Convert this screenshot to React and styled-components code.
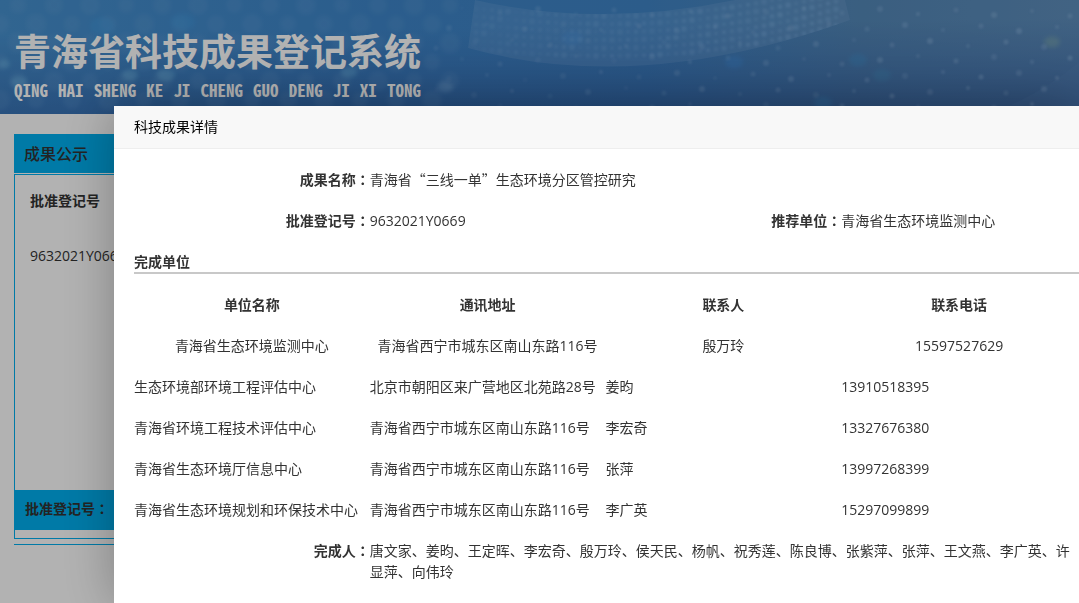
import styled, { createGlobalStyle } from 'styled-components';

const colors = {
   blue: '#00afef',
   text: '#333',
   line: '#c8c8c8',
};

const GlobalStyle = createGlobalStyle`
   * {
      box-sizing: border-box;
   }

   body {
      margin: 0;
      overflow: hidden;
      background-color: #fff;
      color: ${colors.text};
      font-family: 'Open Sans', 'Noto Sans CJK SC', sans-serif;
      font-size: 14px;
      line-height: 21px;
   }
`;

const Banner = styled.header`
   position: relative;
   height: 114px;
   padding: 25px 14px 0;
   overflow: hidden;
`;

const BannerArt = styled.svg`
   position: absolute;
   inset: 0;
   width: 100%;
   height: 100%;
`;

const Brand = styled.div`
   position: relative;
   display: inline-flex;
   flex-direction: column;
   gap: 4px;
   color: #fff;
`;

const BrandName = styled.h1`
   margin: 0;
   font-family: 'Noto Sans CJK SC', sans-serif;
   font-size: 37px;
   font-weight: 700;
   line-height: 50px;
`;

const BrandPinyin = styled.div`
   display: flex;
   justify-content: space-between;
   font-family: 'Noto Sans Mono CJK SC', 'Liberation Sans Narrow', sans-serif;
   font-size: 17px;
   font-weight: 700;
   line-height: 22px;
`;

const Panel = styled.section`
   margin: 20px 14px 0;
   padding-bottom: 5px;
   border-bottom: 1px solid ${colors.blue};
`;

const PanelTitle = styled.h2`
   margin: 0 0 1px;
   padding: 1px 10px 0;
   background-color: ${colors.blue};
   font-size: 16px;
   font-weight: 500;
   line-height: 38px;
`;

const PanelBody = styled.div`
   padding-bottom: 8px;
   border: 1px solid ${colors.blue};
`;

const PublicList = styled.table`
   display: block;
   min-height: 315px;
   padding: 0 15px;
   border-spacing: 0;

   th,
   td {
      padding: 0;
      text-align: left;
   }

   th {
      height: 50px;
   }

   td {
      height: 60px;
   }
`;

const SearchBar = styled.form`
   display: flex;
   align-items: center;
   gap: 5px;
   height: 40px;
   padding: 0 10px 4px;
   background-color: ${colors.blue};
   font-weight: 700;
`;

const SearchInput = styled.input`
   width: 160px;
   height: 26px;
   border: 1px solid #ccc;
   background-color: #fff;
`;

const Shade = styled.div`
   position: fixed;
   inset: 0;
   background-color: rgba(0, 0, 0, 0.3);
`;

const Dialog = styled.div`
   position: fixed;
   top: 106px;
   right: 0;
   bottom: 0;
   left: 114px;
   background-color: #fff;
   box-shadow: 1px 1px 50px rgba(0, 0, 0, 0.3);
`;

const DialogTitle = styled.h3`
   margin: 0;
   padding: 0 20px;
   border-bottom: 1px solid #eee;
   background-color: #f8f8f8;
   color: #000;
   font-size: 14px;
   font-weight: 400;
   line-height: 42px;
`;

const DialogBody = styled.div`
   padding: 10px 0 0 20px;
`;

const Fields = styled.dl`
   display: grid;
   grid-template-columns: repeat(4, 1fr);
   margin: 0;
   padding-right: 2px;
`;

const Label = styled.dt`
   padding: 10px 0;
   font-weight: 700;
   text-align: right;
`;

const Value = styled.dd`
   grid-column: span ${({ $span }) => $span || 1};
   margin: 0;
   padding: 10px 0;
`;

// full-width colon that sits in the middle of its box
const Colon = styled.span.attrs({ lang: 'zh-TW' })`
   font-family: 'Noto Sans CJK TC', sans-serif;
`;

const Quote = styled.span`
   font-family: 'Noto Sans CJK SC', sans-serif;
`;

const SectionTitle = styled.h4`
   margin: 0 0 10px;
   padding-top: 11px;
   border-bottom: 2px solid ${colors.line};
   font-size: 14px;
   font-weight: 700;
   line-height: 20px;
`;

const UnitTable = styled.table`
   width: 100%;
   padding-right: 2px;
   table-layout: fixed;
   border-spacing: 0;

   th,
   td {
      padding: 10px 0;
      white-space: nowrap;
   }
`;

const UnitRow = styled.tr`
   text-align: ${({ $centered }) => ($centered ? 'center' : 'left')};
`;

const pinyin = 'QING HAI SHENG KE JI CHENG GUO DENG JI XI TONG'.split(' ');

const units = [
   ['青海省生态环境监测中心', '青海省西宁市城东区南山东路116号', '殷万玲', '15597527629'],
   ['生态环境部环境工程评估中心', '北京市朝阳区来广营地区北苑路28号', '姜昀', '13910518395'],
   ['青海省环境工程技术评估中心', '青海省西宁市城东区南山东路116号', '李宏奇', '13327676380'],
   ['青海省生态环境厅信息中心', '青海省西宁市城东区南山东路116号', '张萍', '13997268399'],
   ['青海省生态环境规划和环保技术中心', '青海省西宁市城东区南山东路116号', '李广英', '15297099899'],
];

const people =
   '唐文家、姜昀、王定晖、李宏奇、殷万玲、侯天民、杨帆、祝秀莲、陈良博、张紫萍、张萍、王文燕、李广英、许显萍、向伟玲';

const range = (n) => Array.from({ length: n }, (_, i) => i);

// soft discs on the left side of the banner
const bokeh = range(78).map((i) => {
   const row = Math.floor(i / 13);
   return { cx: 18 + (i % 13) * 36 - (row % 2) * 18, cy: 5 + row * 19, r: 8 + (i % 3) };
});

// rows of dots following the curved band, brighter towards the right
const bandDots = range(6).flatMap((row) =>
   range(46).map((i) => {
      const x = 476 + i * 8;
      const d = (x - 612) / 140;
      return {
         cx: x,
         cy: 56 - row * 8 - d * d * (d > 0 ? 12 : 8),
         r: 1.6 + ((i * 5 + row * 3) % 4) * 0.4,
         opacity: 0.04 + (i / 46) * 0.2 + ((i * 7 + row * 5) % 6) * 0.02,
      };
   })
);

// faint points scattered on a slanted lattice
const sparks = range(119).map((i) => {
   const row = Math.floor(i / 17);
   return {
      cx: 462 + (i % 17) * 38 - (row % 3) * 13,
      cy: 8 + row * 16 + ((i * 5) % 9),
      r: 2 + (i % 3) * 0.5,
      opacity: 0.05 + (i % 17) * 0.01 + ((i * 7) % 5) * 0.03,
   };
});

const glows = [
   [4, 64, 6, '#86d0f4'],
   [19, 82, 8, '#86d0f4'],
   [130, 75, 8, '#86d0f4'],
   [166, 75, 9, '#86d0f4'],
   [349, 72, 8, '#86d0f4'],
   [445, 87, 8, '#8fc0ec'],
   [102, 26, 12, '#3f9fe6'],
   [183, 22, 12, '#3f9fe6'],
   [572, 38, 10, '#3f94ea'],
   [734, 62, 9, '#3f94ea'],
   [858, 60, 9, '#3c98d8'],
   [882, 75, 9, '#4596c8'],
   [823, 103, 9, '#3c98d8'],
   [1052, 42, 8, '#9cc3a8'],
];

const BannerBackground = () => (
   <BannerArt viewBox="0 0 1079 114" preserveAspectRatio="xMinYMin slice" aria-hidden="true">
      <defs>
         <linearGradient id="sky" x1="0" y1="0" x2="1" y2="0">
            <stop offset="0" stopColor="#4791cf" />
            <stop offset="0.35" stopColor="#3e86ca" />
            <stop offset="0.6" stopColor="#4085c6" />
            <stop offset="0.8" stopColor="#5488b8" />
            <stop offset="1" stopColor="#5e8ebc" />
         </linearGradient>
         <linearGradient id="depth" x1="0" y1="0" x2="0.15" y2="1">
            <stop offset="0.3" stopColor="#2a549a" stopOpacity="0" />
            <stop offset="1" stopColor="#2a549a" stopOpacity="0.5" />
         </linearGradient>
         <filter id="soft" x="-50%" y="-50%" width="200%" height="200%">
            <feGaussianBlur stdDeviation="2" />
         </filter>
         <filter id="fine">
            <feGaussianBlur stdDeviation="0.8" />
         </filter>
         <clipPath id="band">
            <path d="M475 0 Q600 28 735 0 L845 0 L850 20 Q640 96 468 48 Z" />
         </clipPath>
      </defs>
      <rect width="1079" height="114" fill="url(#sky)" />
      <rect width="1079" height="114" fill="url(#depth)" />
      <g filter="url(#soft)" fill="#7fb0e0" opacity="0.14">
         {bokeh.map((dot, i) => (
            <circle key={i} {...dot} />
         ))}
      </g>
      <g filter="url(#soft)" opacity="0.3">
         {glows.map(([cx, cy, r, fill]) => (
            <ellipse key={cx} cx={cx} cy={cy} rx={r} ry={r * 0.7} fill={fill} />
         ))}
      </g>
      <g clipPath="url(#band)">
         <rect width="1079" height="114" fill="#8ab4e0" opacity="0.2" />
         <g fill="#8fc0f0" filter="url(#fine)">
            {bandDots.map((dot, i) => (
               <circle key={i} {...dot} />
            ))}
         </g>
      </g>
      <path d="M990 114 Q1040 95 1079 62 V114 Z" fill="#5a86c0" opacity="0.2" />
      <g fill="#a8cdf2" filter="url(#fine)">
         {sparks.map((dot, i) => (
            <circle key={i} {...dot} />
         ))}
      </g>
   </BannerArt>
);

const FieldLabel = ({ children }) => (
   <Label>
      {children}
      <Colon>：</Colon>
   </Label>
);

export default function App() {
   return (
      <div lang="zh-CN">
         <GlobalStyle />
         <Banner>
            <BannerBackground />
            <Brand>
               <BrandName>青海省科技成果登记系统</BrandName>
               <BrandPinyin>
                  {pinyin.map((word, i) => (
                     <span key={i}>{word}</span>
                  ))}
               </BrandPinyin>
            </Brand>
         </Banner>
         <Panel>
            <PanelTitle>成果公示</PanelTitle>
            <PanelBody>
               <PublicList>
                  <thead>
                     <tr>
                        <th>批准登记号</th>
                     </tr>
                  </thead>
                  <tbody>
                     <tr>
                        <td>9632021Y0669</td>
                     </tr>
                  </tbody>
               </PublicList>
               <SearchBar>
                  <label htmlFor="number">
                     批准登记号<Colon>：</Colon>
                  </label>
                  <SearchInput id="number" type="text" />
               </SearchBar>
            </PanelBody>
         </Panel>
         <Shade />
         <Dialog role="dialog" aria-labelledby="dialog-title">
            <DialogTitle id="dialog-title">科技成果详情</DialogTitle>
            <DialogBody>
               <Fields>
                  <FieldLabel>成果名称</FieldLabel>
                  <Value $span={3}>
                     青海省<Quote>“</Quote>三线一单<Quote>”</Quote>生态环境分区管控研究
                  </Value>
                  <FieldLabel>批准登记号</FieldLabel>
                  <Value>9632021Y0669</Value>
                  <FieldLabel>推荐单位</FieldLabel>
                  <Value>青海省生态环境监测中心</Value>
               </Fields>
               <SectionTitle>完成单位</SectionTitle>
               <UnitTable>
                  <thead>
                     <UnitRow $centered>
                        <th>单位名称</th>
                        <th>通讯地址</th>
                        <th>联系人</th>
                        <th>联系电话</th>
                     </UnitRow>
                  </thead>
                  <tbody>
                     {units.map((unit, i) => (
                        <UnitRow key={unit[0]} $centered={i === 0}>
                           {unit.map((cell) => (
                              <td key={cell}>{cell}</td>
                           ))}
                        </UnitRow>
                     ))}
                  </tbody>
               </UnitTable>
               <Fields>
                  <FieldLabel>完成人</FieldLabel>
                  <Value $span={3}>{people}</Value>
               </Fields>
            </DialogBody>
         </Dialog>
      </div>
   );
}
